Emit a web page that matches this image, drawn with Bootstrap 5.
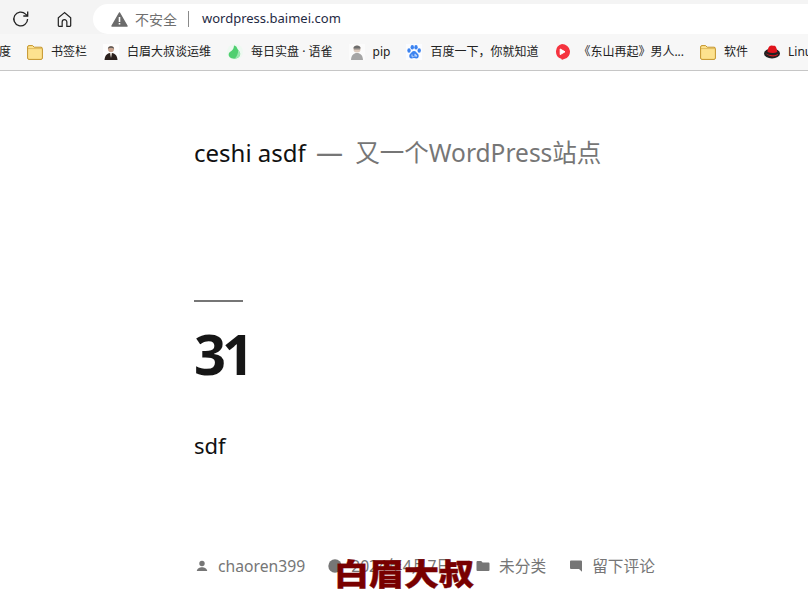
<!DOCTYPE html>
<html lang="zh-CN">
<head>
  <meta charset="UTF-8" />
  <meta name="viewport" content="width=device-width, initial-scale=1" />
  <title>ceshi asdf</title>
  <link href="https://cdn.jsdelivr.net/npm/bootstrap@5.3.0/dist/css/bootstrap.min.css" rel="stylesheet" />
  <style>
    html, body { height: 616px; overflow: hidden; }
    body { font-family: "Noto Sans", "Noto Sans CJK SC", sans-serif; color: #111; background: #fff; position: relative; }
    .tool-strip { height: 34px; background: #f4f4f4; padding: 4px 0 0 12px; }
    .tool-btn { width: 18px; height: 30px; }
    .tool-home { margin-left: 27px; }
    .addr-pill { background: #fff; height: 30px; margin-left: 18px; border-radius: 15px 0 0 15px; padding-left: 18px; font-size: 13px; }
    .addr-warn { color: #6f6f6f; margin-left: 7px; font-size: 14px; }
    .addr-sep { width: 1px; height: 16px; background: #8a8a8a; margin: 0 13px 0 11px; }
    .addr-url { color: #1f2a44; }
    .mark-strip { height: 37px; background: #f7f7f7; border-bottom: 1px solid #c6c6c6; font-size: 12px; color: #222; overflow: hidden; }
    .mark-cut { margin-left: -1px; margin-right: 16px; }
    .mark-item { margin-right: 16px; gap: 8px; }
    .mark-item svg { flex-shrink: 0; }
    .wp-main { padding-left: 194px; width: 640px; }
    .wp-head { margin-top: 64px; font-size: 24px; line-height: 34px; }
    .wp-dash { color: #767676; font-size: 27px; line-height: 34px; margin: 0 6px 0 4px; }
    .wp-tag { color: #767676; font-size: 24.500px; }
    .wp-rule { width: 49px; height: 2px; background: #767676; margin-top: 130px; }
    .wp-num { font-size: 56px; line-height: 80px; letter-spacing: -4px; font-weight: 700; margin: 11px 0 0; color: #161616; }
    .wp-text { font-size: 22px; line-height: 32px; margin: 36px 0 0; }
    .wp-meta { margin-top: 93px; font-size: 15.700px; line-height: 24px; color: #767676; }
    .wp-meta svg { flex-shrink: 0; margin-right: 8px; }
    .wp-meta span { margin-right: 22px; }
    .wp-meta .meta-date { margin-right: 23px; }
    .stamp-mark { position: absolute; left: 334px; top: 552px; font-size: 35px; line-height: 40px; font-weight: 900; color: #780000; font-family: "Noto Sans CJK SC", sans-serif; -webkit-text-stroke: .5px #780000; white-space: nowrap; transform: scaleY(.85); }
  </style>
</head>
<body>
  <!-- Browser toolbar -->
  <div class="tool-strip d-flex align-items-start">
    <div class="tool-btn d-flex align-items-center">
      <svg width="18" height="18" viewBox="0 0 18 18" fill="none" stroke="#222" stroke-width="1.3"><path d="M15.600 9a6.900 6.900 0 1 1-2-4.900L15.600 6"/><path d="M15.700 1.600V6h-4.400"/></svg>
    </div>
    <div class="tool-btn tool-home d-flex align-items-center">
      <svg width="15" height="17" viewBox="0 0 16 17" fill="none" stroke="#222" stroke-width="1.300"><path d="M8 1.200 1.400 6.800v8.200a.8.8 0 0 0 .8.8h3.300v-4.600a2.500 2.500 0 0 1 5 0v4.600h3.300a.8.8 0 0 0 .8-.8V6.800z"/></svg>
    </div>
    <div class="addr-pill flex-grow-1 d-flex align-items-center">
      <svg width="17" height="15" viewBox="0 0 17 15"><path d="M8.500 1 16 14H1z" fill="#6b6b6b" stroke="#6b6b6b" stroke-width="1.500" stroke-linejoin="round"/><path d="M7.700 5h1.600v5H7.700zM7.700 11h1.600v1.600H7.700z" fill="#fff"/></svg>
      <span class="addr-warn">不安全</span>
      <span class="addr-sep"></span>
      <span class="addr-url">wordpress.baimei.com</span>
    </div>
  </div>

  <!-- Bookmarks -->
  <div class="mark-strip d-flex align-items-center text-nowrap">
    <span class="mark-cut">度</span>
    <div class="mark-item d-flex align-items-center">
      <svg width="16" height="15" viewBox="0 0 16 15"><path d="M.6 2A1.400 1.400 0 0 1 2 .6h3.600L7.200 2.200h6.800a1.400 1.400 0 0 1 1.400 1.400V13a1.400 1.400 0 0 1-1.400 1.400H2A1.400 1.400 0 0 1 .6 13z" fill="#fde28f" stroke="#c4942a"/><path d="M1 3.600h14" stroke="#c4942a" stroke-width=".5"/></svg>
      <span>书签栏</span>
    </div>
    <div class="mark-item d-flex align-items-center">
      <svg width="16" height="16" viewBox="0 0 16 16"><rect width="16" height="16" fill="#fdfdfd"/><circle cx="8" cy="5" r="3.100" fill="#c9a48f"/><path d="M4.900 4.800C4.900 1.400 11.100 1.400 11.100 4.800 9 3.500 7 3.500 4.900 4.800z" fill="#555"/><path d="M1.500 16c.5-5.500 3.500-7 6.500-7s6 1.500 6.500 7z" fill="#2b211d"/><path d="M6.800 9h2.400L8 14z" fill="#d8d0c8"/></svg>
      <span>白眉大叔谈运维</span>
    </div>
    <div class="mark-item d-flex align-items-center">
      <svg width="16" height="16" viewBox="0 0 16 16"><circle cx="8" cy="8" r="8" fill="#eef9f1"/><path d="M7 1.500c3 .5 2.800 2.500 4 4.200 1.300 1.600 3 3.300 1.800 6C11.700 14.400 7.500 15.300 4.500 14.300 1.800 13.200.9 10.600 2.400 8.600 3.800 7 6.800 6.300 7 1.500z" fill="#4fcf70"/><path d="M11 5.700c1.300 1.600 3 3.300 1.800 6-1.100 1.800-3 2.700-4.900 2.900C10 12.200 11.500 9 11 5.700z" fill="#9be8b0"/></svg>
      <span>每日实盘 · 语雀</span>
    </div>
    <div class="mark-item d-flex align-items-center">
      <svg width="16" height="16" viewBox="0 0 16 16"><rect width="16" height="16" fill="#fbfbfb"/><circle cx="8" cy="5" r="3.600" fill="#dccabd"/><path d="M4.400 4.400C4.600.6 11.400.6 11.600 4.400z" fill="#6d6d6d"/><path d="M5 5h6" stroke="#666" stroke-width=".7"/><path d="M2 16c.3-5 2.800-7 6-7s5.700 2 6 7z" fill="#a5a5a5"/></svg>
      <span>pip</span>
    </div>
    <div class="mark-item d-flex align-items-center">
      <svg width="16" height="16" viewBox="0 0 16 16" fill="#3a82f0"><rect width="16" height="16" fill="#fbfcff"/><ellipse cx="3" cy="6.500" rx="1.700" ry="2.200"/><ellipse cx="6.300" cy="3.300" rx="1.700" ry="2.300"/><ellipse cx="10" cy="3.300" rx="1.700" ry="2.300"/><ellipse cx="13.200" cy="6.500" rx="1.700" ry="2.200"/><path d="M8 7c-2 0-2.500 1.800-3.800 2.800C2.800 11 2.800 14.500 5.500 14.500c1 0 1.600-.4 2.500-.4s1.500.4 2.500.4c2.700 0 2.700-3.500 1.300-4.700C10.500 8.800 10 7 8 7z"/><path d="M6 10.500v1.800c0 .8 1.500.8 1.500 0M9 9.800v3M9 11h1.300v1.800" stroke="#fff" stroke-width=".7" fill="none"/></svg>
      <span>百度一下，你就知道</span>
    </div>
    <div class="mark-item d-flex align-items-center">
      <svg width="16" height="16" viewBox="0 0 16 16"><path d="M8 0a8 7.700 0 0 1 2.200 15.100c-1 .4-1.700.7-2.600.9.400-.8.200-1.100-.4-1.200A7.700 7.700 0 0 1 8 0z" fill="#f5333f"/><path d="M6.200 5 11 7.800 6.200 10.600z" fill="#fff" stroke="#fff" stroke-linejoin="round"/></svg>
      <span>《东山再起》男人...</span>
    </div>
    <div class="mark-item d-flex align-items-center">
      <svg width="16" height="15" viewBox="0 0 16 15"><path d="M.6 2A1.400 1.400 0 0 1 2 .6h3.600L7.200 2.200h6.800a1.400 1.400 0 0 1 1.400 1.400V13a1.400 1.400 0 0 1-1.400 1.400H2A1.400 1.400 0 0 1 .6 13z" fill="#fde28f" stroke="#c4942a"/><path d="M1 3.600h14" stroke="#c4942a" stroke-width=".5"/></svg>
      <span>软件</span>
    </div>
    <div class="mark-item d-flex align-items-center">
      <svg width="16" height="16" viewBox="0 0 16 16"><ellipse cx="8" cy="9.500" rx="8" ry="5" fill="#222"/><path d="M3.500 8c.3-3.500 1.500-7 4.500-6.500 1 .2 1.500.5 2.500.2 1.500-.3 2.500 4 2.800 6.300-3 1.500-6.800 1-9.800 0z" fill="#e0141c"/><path d="M1.500 9c3 2.500 9 3 12.500 1 .4 1-1 1.800-3 2.300-3 .5-8-.5-9.500-3.300z" fill="#e0141c"/></svg>
      <span>Linux</span>
    </div>
  </div>

  <!-- Blog content -->
  <main class="wp-main">
    <div class="wp-head text-nowrap">
      <span>ceshi asdf</span>
      <span class="wp-dash">—</span>
      <span class="wp-tag">又一个WordPress站点</span>
    </div>
    <div class="wp-rule"></div>
    <h1 class="wp-num">31</h1>
    <p class="wp-text">sdf</p>
    <div class="wp-meta d-flex align-items-center text-nowrap">
      <svg width="16" height="16" viewBox="0 0 16 16" fill="#767676"><circle cx="8" cy="5.500" r="2.700"/><path d="M2.800 13c0-2.500 3-3.800 5.200-3.800s5.200 1.300 5.200 3.800z"/></svg>
      <span>chaoren399</span>
      <svg width="16" height="16" viewBox="0 0 16 16" fill="#767676"><circle cx="8" cy="8" r="6.700"/></svg>
      <span class="meta-date">2024年4月7日</span>
      <svg width="16" height="16" viewBox="0 0 16 16" fill="#767676"><path d="M1.500 4a1 1 0 0 1 1-1h3.700l1.400 1.500h5.900a1 1 0 0 1 1 1V12a1 1 0 0 1-1 1h-11a1 1 0 0 1-1-1z"/></svg>
      <span>未分类</span>
      <svg width="16" height="16" viewBox="0 0 16 16" fill="#767676"><path d="M2 3.500a1 1 0 0 1 1-1h10a1 1 0 0 1 1 1v10.300L11 11H3a1 1 0 0 1-1-1z"/></svg>
      <span>留下评论</span>
    </div>
  </main>

  <div class="stamp-mark">白眉大叔</div>

  <script src="https://cdn.jsdelivr.net/npm/bootstrap@5.3.0/dist/js/bootstrap.bundle.min.js"></script>
</body>
</html>
